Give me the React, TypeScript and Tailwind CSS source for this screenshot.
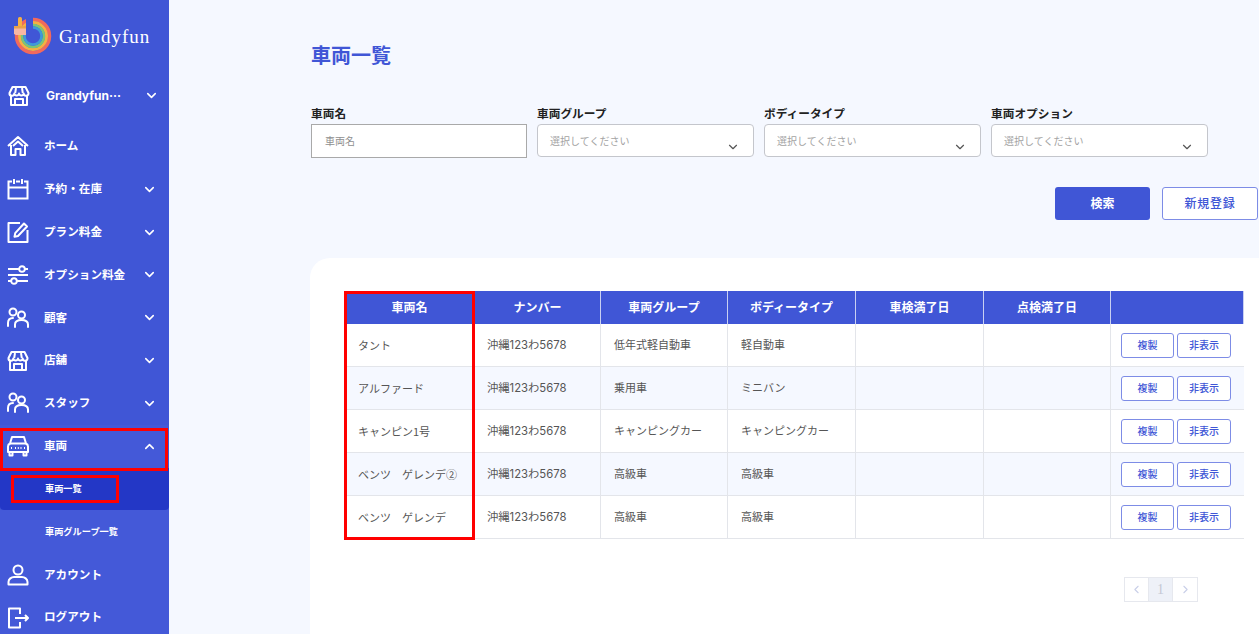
import React from 'react'
import { ChevronDown, ChevronUp, ChevronLeft, ChevronRight } from 'lucide-react'

const StoreIcon = () => (
  <svg width="22" height="22" viewBox="0 0 22 22" fill="none" stroke="white" strokeWidth="2" strokeLinejoin="round">
    <path d="M4.500 2h13l3 6a2.400 2.400 0 0 1-4.800.6 2.400 2.400 0 0 1-4.700 0 2.400 2.400 0 0 1-4.700 0A2.400 2.400 0 0 1 1.500 8z" />
    <path d="M3 11v9h16v-9M7 20v-6h8v6M8 3l-.8 5M14 3l.8 5" />
  </svg>
)

const HomeIcon = () => (
  <svg width="22" height="22" viewBox="0 0 22 22" fill="none" stroke="white" strokeWidth="2" strokeLinejoin="round">
    <path d="M1 11 11 2l10 9M4 10v10h4.500v-6h5v6H18V10" />
    <path d="M6 11l5-4.500 5 4.500" />
  </svg>
)

const CalendarIcon = () => (
  <svg width="22" height="22" viewBox="0 0 22 22" fill="none" stroke="white" strokeWidth="2">
    <path d="M5 3.500H1.500v17h19v-17H17M9 3.500h4M1.500 9.500h19M7 1v5M15 1v5" />
  </svg>
)

const EditIcon = () => (
  <svg width="22" height="22" viewBox="0 0 22 22" fill="none" stroke="white" strokeWidth="2" strokeLinejoin="round">
    <path d="M13 2H1.500v19h19V9" />
    <path d="M17 2.500 20 5.500 11 15l-3.500.8.700-3.600z" />
  </svg>
)

const SlidersIcon = () => (
  <svg width="22" height="22" viewBox="0 0 22 22" fill="none" stroke="white" strokeWidth="1.900">
    <path d="M1 5h11M18 5h3M1 11h20M1 17h3M10 17h11" />
    <circle cx="15" cy="5" r="2.800" />
    <circle cx="7" cy="17" r="2.800" />
  </svg>
)

const UsersIcon = () => (
  <svg width="22" height="22" viewBox="0 0 22 22" fill="none" stroke="white" strokeWidth="2" strokeLinecap="round">
    <circle cx="6" cy="5" r="3.500" />
    <circle cx="14.500" cy="8" r="3.500" />
    <path d="M1 19v-3c0-3 2-5 5-5M8 20v-2.500c0-3 2.500-4.500 6.500-4.500s6.500 1.500 6.500 4.500V20" />
  </svg>
)

const CarIcon = () => (
  <svg width="22" height="22" viewBox="0 0 22 22" fill="none" stroke="white" strokeWidth="2" strokeLinejoin="round">
    <path d="M5 2h12l2 6.500c1.200.6 2 1.500 2 3V17H1v-5.500c0-1.500.8-2.400 2-3z" />
    <path d="M3 8.500h16M2.500 17v3.500h3V17M16.500 17v3.500h3V17M8 13h1M10.800 13h1M13.500 13h1M4 13h1M17 13h1" />
  </svg>
)

const UserIcon = () => (
  <svg width="22" height="22" viewBox="0 0 22 22" fill="none" stroke="white" strokeWidth="2" strokeLinejoin="round">
    <circle cx="11" cy="6" r="4.500" />
    <path d="M1.500 20.500v-2.500c0-3 3-5 5.500-5h8c2.500 0 5.500 2 5.500 5v2.500z" />
  </svg>
)

const LogoutIcon = () => (
  <svg width="22" height="22" viewBox="0 0 22 22" fill="none" stroke="white" strokeWidth="2" strokeLinejoin="round">
    <path d="M13 7V1.500H2v19h11V15M8 11h13M18 8l3 3-3 3" />
  </svg>
)

const Logo = () => (
  <svg width="40" height="40" viewBox="0 0 40 40" fill="none">
    <circle cx="20" cy="20" r="16.500" stroke="#f2695c" strokeWidth="3.500" />
    <circle cx="20" cy="20" r="13.500" stroke="#f6b042" strokeWidth="3" />
    <circle cx="20" cy="20" r="11" stroke="#7cc576" strokeWidth="2.500" />
    <circle cx="20" cy="20" r="8.500" stroke="#3f9bd8" strokeWidth="2.500" />
    <rect x="13" y="0" width="7" height="17" fill="#4056d6" />
    <rect x="5" y="1" width="4" height="10" rx="1.500" fill="#f6b042" />
    <path d="M1 10h12v9H3l-2-1z" fill="#f7b7a3" />
    <rect x="1" y="10" width="12" height="2.500" fill="#e8a24a" />
  </svg>
)

const SideItem = ({ icon, label, chevron }: { icon: React.ReactNode; label: string; chevron?: boolean }) => (
  <div className="flex h-[42.85px] shrink-0 items-center pl-[7px] pr-[12px]">
    <div className="w-[37px] shrink-0">{icon}</div>
    <span className="flex-1 pt-[1px] text-[11.6px] font-bold text-white">{label}</span>
    {chevron && <ChevronDown size={15} color="white" strokeWidth={2.5} />}
  </div>
)

const Sidebar = () => (
  <aside className="flex h-[634px] w-[169px] shrink-0 flex-col overflow-hidden bg-[#4056d6]">
    <div className="flex h-[75px] shrink-0 items-start pl-[13px] pt-[16px]">
      <Logo />
      <span className="ml-[6px] mt-[7px] text-[19px] tracking-[1px] text-white [font-family:'Liberation_Serif',serif]">Grandyfun</span>
    </div>
    <div className="flex h-[50px] shrink-0 items-center pl-[8px] pr-[10px] pb-[9px]">
      <div className="w-[38px] shrink-0"><StoreIcon /></div>
      <span className="flex-1 text-xs font-bold text-white">Grandyfun···</span>
      <ChevronDown size={15} color="white" strokeWidth={2.5} />
    </div>
    <SideItem icon={<HomeIcon />} label="ホーム" />
    <SideItem icon={<CalendarIcon />} label="予約・在庫" chevron />
    <SideItem icon={<EditIcon />} label="プラン料金" chevron />
    <SideItem icon={<SlidersIcon />} label="オプション料金" chevron />
    <SideItem icon={<UsersIcon />} label="顧客" chevron />
    <SideItem icon={<StoreIcon />} label="店舗" chevron />
    <SideItem icon={<UsersIcon />} label="スタッフ" chevron />
    <div className="relative z-10 flex h-[43px] shrink-0 items-center bg-[#4459d8] pl-[7px] pr-[12px]">
      <div className="w-[37px] shrink-0"><CarIcon /></div>
      <span className="flex-1 pt-[1px] text-[11.6px] font-bold text-white">車両</span>
      <ChevronUp size={15} color="white" strokeWidth={2.5} />
      <div className="absolute left-0 right-[1px] top-[3px] h-[43px] border-[3px] border-[#ff0000]" />
    </div>
    <div className="relative flex h-[42px] shrink-0 items-center rounded-b-[4px] bg-[#2337c6] pl-[45px]">
      <span className="text-[9.2px] font-bold text-white">車両一覧</span>
      <div className="absolute left-[11px] top-[7px] h-[28px] w-[108px] border-[3px] border-[#ff0000]" />
    </div>
    <div className="flex h-[43.5px] shrink-0 items-center bg-[#4459d8] pl-[45px]">
      <span className="text-[9.2px] font-bold text-white">車両グループ一覧</span>
    </div>
    <div className="flex-1 bg-[#4459d8]">
      <SideItem icon={<UserIcon />} label="アカウント" />
      <SideItem icon={<LogoutIcon />} label="ログアウト" />
    </div>
  </aside>
)

const Field = ({ label, placeholder, select }: { label: string; placeholder: string; select?: boolean }) => (
  <div className={select ? 'w-[217px] shrink-0' : 'w-[216px] shrink-0'}>
    <div className="mb-[3px] text-[11.7px] leading-[14px] font-bold text-[#222222]">{label}</div>
    {select ? (
      <div className="relative flex h-[33px] items-center rounded-[4px] border border-[#c4c6cc] bg-white pl-[12px] pt-[1px] text-[10px] text-[#a3a3a3]">
        {placeholder}
        <ChevronDown size={14} color="#555555" className="absolute right-[13px] top-[15px]" />
      </div>
    ) : (
      <div className="flex h-[34px] items-center border border-[#a9a9a9] bg-white pl-[13px] pt-[1px] text-[10px] text-[#8f8f8f]">{placeholder}</div>
    )}
  </div>
)

const columns = [
  { label: '車両名', width: 'w-[130px]' },
  { label: 'ナンバー', width: 'w-[126px]' },
  { label: '車両グループ', width: 'w-[127px]' },
  { label: 'ボディータイプ', width: 'w-[128px]' },
  { label: '車検満了日', width: 'w-[128px]' },
  { label: '点検満了日', width: 'w-[127px]' },
  { label: '', width: 'w-[133px]' },
]

const rows = [
  { name: 'タント', group: '低年式軽自動車', body: '軽自動車' },
  { name: 'アルファード', group: '乗用車', body: 'ミニバン' },
  { name: 'キャンピン1号', group: 'キャンピングカー', body: 'キャンピングカー' },
  { name: 'ベンツ　ゲレンデ②', group: '高級車', body: '高級車' },
  { name: 'ベンツ　ゲレンデ', group: '高級車', body: '高級車' },
]

const VehicleTable = () => (
  <div className="relative w-[899px]">
    <table className="w-[899px] table-fixed border-separate border-spacing-0">
      <thead>
        <tr className="h-[33px] bg-[#4056d6]">
          {columns.map((col, index) => (
            <th key={index} className={`${col.width} border-r border-[#c9d0f2] text-center text-xs font-bold text-white`}>{col.label}</th>
          ))}
        </tr>
      </thead>
      <tbody>
        {rows.map((row, index) => (
          <tr key={index} className={`h-[43px] text-[11px] text-[#555555] ${index % 2 === 1 ? 'bg-[#f5f8ff]' : 'bg-white'}`}>
            <td className="border-r border-b border-[#e3e5ea] pl-[13px] [font-family:'Noto_Sans_CJK_JP',sans-serif]">{row.name}</td>
            <td className="border-r border-b border-[#e3e5ea] pl-[12px] text-[11.3px]">沖縄123わ5678</td>
            <td className="border-r border-b border-[#e3e5ea] pl-[13px]">{row.group}</td>
            <td className="border-r border-b border-[#e3e5ea] pl-[13px]">{row.body}</td>
            <td className="border-r border-b border-[#e3e5ea]" />
            <td className="border-r border-b border-[#e3e5ea]" />
            <td className="border-b border-[#e3e5ea] pl-[10px]">
              <div className="flex gap-[3px]">
                <button className="h-[25px] w-[53px] rounded-[3px] border border-[#7d8ce6] bg-white text-[10px] font-medium text-[#4056d6]">複製</button>
                <button className="h-[25px] w-[54px] rounded-[3px] border border-[#7d8ce6] bg-white text-[10px] font-medium text-[#4056d6]">非表示</button>
              </div>
            </td>
          </tr>
        ))}
      </tbody>
    </table>
    <div className="absolute left-[-1px] top-0 h-[249px] w-[131px] border-[3px] border-[#ff0000]" />
  </div>
)

const Pagination = () => (
  <div className="mt-[38px] ml-[779px] flex h-[25px] w-[74px] border border-[#e6e8ee] bg-white text-[#c9cfe8]">
    <div className="flex w-[24px] items-center justify-center border-r border-[#e6e8ee]"><ChevronLeft size={13} /></div>
    <div className="flex w-[25px] items-center justify-center border-r border-[#e6e8ee] bg-[#eef1f8] text-sm text-[#c4c8d4] [font-family:'Liberation_Serif',serif]">1</div>
    <div className="flex w-[24px] items-center justify-center"><ChevronRight size={13} /></div>
  </div>
)

export default function App() {
  return (
    <div className="flex h-[634px] w-[1259px] overflow-hidden bg-[#f5f8ff] [font-family:'Inter','Noto_Sans_CJK_JP',sans-serif]">
      <Sidebar />
      <main className="min-w-0 flex-1 pl-[141px]">
        <h1 className="mt-[42px] pl-[1px] text-xl leading-[28px] font-bold text-[#4056d6]">車両一覧</h1>
        <div className="mt-[37px] flex gap-[10px] pl-[1px]">
          <Field label="車両名" placeholder="車両名" />
          <Field label="車両グループ" placeholder="選択してください" select />
          <Field label="ボディータイプ" placeholder="選択してください" select />
          <Field label="車両オプション" placeholder="選択してください" select />
        </div>
        <div className="mt-[29px] flex w-[948px] justify-end gap-[12px]">
          <button className="h-[33px] w-[95px] rounded-[3px] bg-[#4056d6] text-xs font-bold text-white">検索</button>
          <button className="h-[33px] w-[96px] rounded-[3px] border border-[#7d8ce6] bg-white text-xs font-medium tracking-[0.7px] text-[#4056d6]">新規登録</button>
        </div>
        <section className="mt-[38px] h-[400px] w-[970px] rounded-l-[20px] bg-white pl-[35px] pt-[33px]">
          <VehicleTable />
          <Pagination />
        </section>
      </main>
    </div>
  )
}
